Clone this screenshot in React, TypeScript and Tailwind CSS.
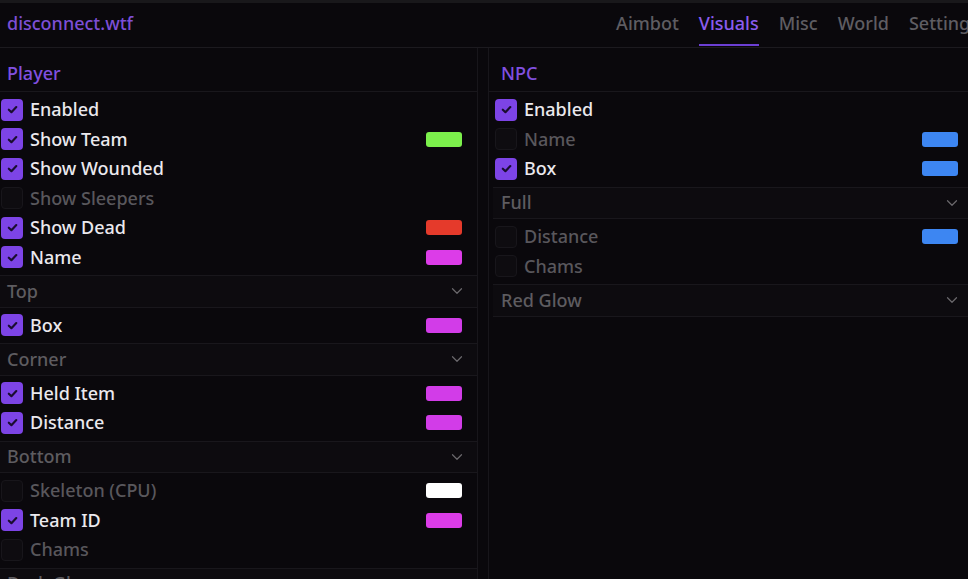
import { ChevronDown } from "lucide-react";

type Item =
  | { kind: "check"; label: string; on: boolean; color?: string }
  | { kind: "select"; value: string };

const player: Item[] = [
  { kind: "check", label: "Enabled", on: true },
  { kind: "check", label: "Show Team", on: true, color: "#7cf04c" },
  { kind: "check", label: "Show Wounded", on: true },
  { kind: "check", label: "Show Sleepers", on: false },
  { kind: "check", label: "Show Dead", on: true, color: "#e53a2b" },
  { kind: "check", label: "Name", on: true, color: "#dc3ce8" },
  { kind: "select", value: "Top" },
  { kind: "check", label: "Box", on: true, color: "#d23ce8" },
  { kind: "select", value: "Corner" },
  { kind: "check", label: "Held Item", on: true, color: "#d23ce8" },
  { kind: "check", label: "Distance", on: true, color: "#d23ce8" },
  { kind: "select", value: "Bottom" },
  { kind: "check", label: "Skeleton (CPU)", on: false, color: "#ffffff" },
  { kind: "check", label: "Team ID", on: true, color: "#dc3ce8" },
  { kind: "check", label: "Chams", on: false },
  { kind: "select", value: "Dark Glow" },
];

const npc: Item[] = [
  { kind: "check", label: "Enabled", on: true },
  { kind: "check", label: "Name", on: false, color: "#3d86f2" },
  { kind: "check", label: "Box", on: true, color: "#3d86f2" },
  { kind: "select", value: "Full" },
  { kind: "check", label: "Distance", on: false, color: "#3d86f2" },
  { kind: "check", label: "Chams", on: false },
  { kind: "select", value: "Red Glow" },
];

function Check({ on }: { on: boolean }) {
  if (!on) {
    return <div className="w-[22px] h-[22px] rounded-[4px] bg-[#0e0c10] border border-[#18161b] shrink-0" />;
  }
  return (
    <div className="w-[22px] h-[22px] rounded-[4px] bg-[#7d44e6] flex items-center justify-center shrink-0">
      <svg width="13" height="13" viewBox="0 0 12 12" fill="none">
        <path d="M2.6 6.2 L5 8.5 L9.5 3.8" stroke="#1a0d30" strokeWidth="2" strokeLinecap="round" strokeLinejoin="round" />
      </svg>
    </div>
  );
}

function Row({ item, side }: { item: Item; side: "left" | "right" }) {
  if (item.kind === "select") {
    return (
      <div className="h-[38.5px] py-[3px]">
        <div className={`h-full flex items-center justify-between bg-[#0d0b0f] border-y border-[#19171c] ${side === "left" ? "pl-[7px] pr-[11px]" : "pl-[8px] pr-[7px]"}`}>
          <span className="text-[#5e5c60] font-medium">{item.value}</span>
          <ChevronDown size={18} strokeWidth={1.6} className="text-[#6a686c]" />
        </div>
      </div>
    );
  }
  return (
    <div className={`h-[29.5px] flex items-center ${side === "left" ? "pl-[1px] pr-[15px]" : "pl-[2px] pr-[10px]"}`}>
      <Check on={item.on} />
      <span className={`ml-[7px] flex-1 font-medium ${item.on ? "text-[#ebe9ee]" : "text-[#59575c]"}`}>{item.label}</span>
      {item.color && <div className="w-[36px] h-[15px] rounded-[3px]" style={{ backgroundColor: item.color }} />}
    </div>
  );
}

function Panel({ title, items, side }: { title: string; items: Item[]; side: "left" | "right" }) {
  return (
    <div className={`h-full flex flex-col ${side === "left" ? "w-[478px] border-r border-[#18161b]" : "flex-1 border-l border-[#18161b]"}`}>
      <div className={`h-[44px] shrink-0 flex items-center pt-[7px] border-b border-[#19171c] text-[#8150e0] font-medium ${side === "left" ? "pl-[7px]" : "pl-[12px]"}`}>
        {title}
      </div>
      <div className={`pt-[3px] ${side === "right" ? "pl-[4px]" : ""}`}>
        {items.map((it, i) => (
          <Row key={i} item={it} side={side} />
        ))}
      </div>
    </div>
  );
}

export default function App() {
  const tabs = ["Aimbot", "Visuals", "Misc", "World", "Settings"];
  return (
    <div
      className="w-[968px] h-[579px] overflow-hidden bg-[#0a080c] text-[18px] flex flex-col"
      style={{ fontFamily: '"Noto Sans", "Open Sans", sans-serif' }}
    >
      <div className="h-[48px] shrink-0 border-t-[3px] border-[#19181b] border-b border-b-[#1c1a1f] flex items-center justify-between pl-[7px] pb-[4px]">
        <span className="text-[#7d4fd6] font-medium">disconnect.wtf</span>
        <div className="flex h-full items-center gap-[20px] -mr-[11px]">
          {tabs.map((t) => (
            <div key={t} className="relative h-full flex items-center">
              <span className={`font-medium ${t === "Visuals" ? "text-[#8b5cf0]" : "text-[#5f5d62]"}`}>{t}</span>
              {t === "Visuals" && <div className="absolute left-0 right-0 -bottom-[3px] h-[2px] bg-[#6c3fd4]" />}
            </div>
          ))}
        </div>
      </div>
      <div className="flex-1 flex gap-[10px]">
        <Panel title="Player" items={player} side="left" />
        <Panel title="NPC" items={npc} side="right" />
      </div>
    </div>
  );
}
